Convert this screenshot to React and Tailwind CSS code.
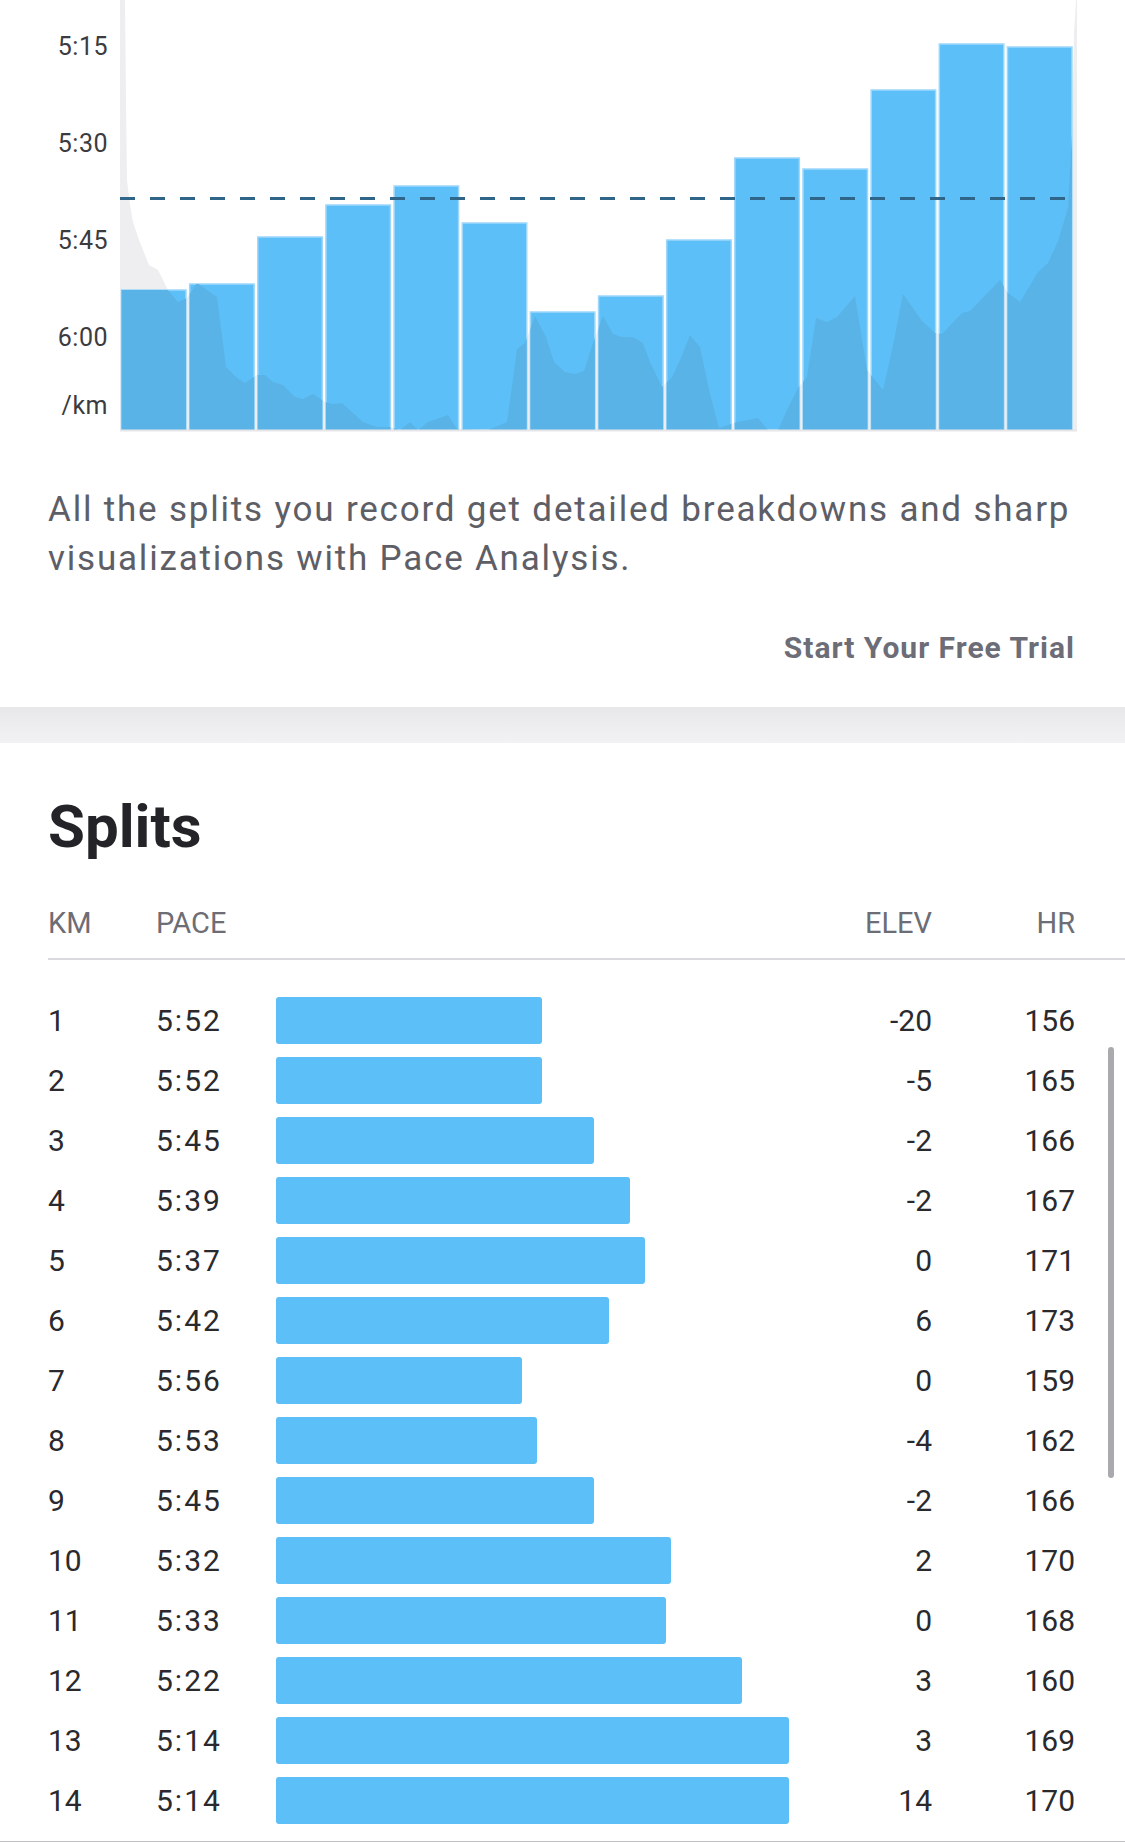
import React from "react";

// pace bars in the chart: top y of each km (page px), bottom is 430
const chartTops = [290, 284, 237, 205, 186, 223, 312, 296, 240, 158, 169, 90, 44, 47];

// elevation / hr profile drawn behind the bars
const areaPath =
  "M120,0 L125,0 L126,100 L127,180 L130,205 L133,222 L139,240 L149,265 L158,270 L168,290 L178,302 L187,298 L197,283 L207,290 L217,297 L226,367 L237,378 L245,383 L257,375 L265,375 L273,382 L283,385 L295,397 L303,399 L313,394 L325,402 L333,404 L342,403 L353,413 L363,422 L377,427 L390,427 L400,430 L410,422 L418,430 L428,422 L448,415 L457,429 L488,430 L507,422 L517,349 L525,343 L535,316 L546,337 L554,362 L565,372 L575,374 L584,371 L593,343 L603,316 L613,334 L622,337 L633,337 L643,343 L650,362 L662,387 L672,377 L681,358 L690,335 L700,347 L709,390 L719,428 L737,422 L758,418 L768,430 L778,430 L788,408 L798,388 L807,377 L816,318 L827,322 L837,317 L855,296 L867,370 L883,390 L893,345 L903,294 L922,321 L935,333 L942,334 L962,313 L970,311 L1000,280 L1008,293 L1020,302 L1038,272 L1048,263 L1058,241 L1068,208 L1072,133 L1074,33 L1076,0 L1077,0 L1077,430 L120,430 Z";

const splits = [
  { km: 1, pace: "5:52", w: 266, elev: "-20", hr: 156 },
  { km: 2, pace: "5:52", w: 266, elev: "-5", hr: 165 },
  { km: 3, pace: "5:45", w: 318, elev: "-2", hr: 166 },
  { km: 4, pace: "5:39", w: 354, elev: "-2", hr: 167 },
  { km: 5, pace: "5:37", w: 369, elev: "0", hr: 171 },
  { km: 6, pace: "5:42", w: 333, elev: "6", hr: 173 },
  { km: 7, pace: "5:56", w: 246, elev: "0", hr: 159 },
  { km: 8, pace: "5:53", w: 261, elev: "-4", hr: 162 },
  { km: 9, pace: "5:45", w: 318, elev: "-2", hr: 166 },
  { km: 10, pace: "5:32", w: 395, elev: "2", hr: 170 },
  { km: 11, pace: "5:33", w: 390, elev: "0", hr: 168 },
  { km: 12, pace: "5:22", w: 466, elev: "3", hr: 160 },
  { km: 13, pace: "5:14", w: 513, elev: "3", hr: 169 },
  { km: 14, pace: "5:14", w: 513, elev: "14", hr: 170 },
];

function PaceChart() {
  const bars = chartTops.map((top, i) => ({
    x: 121.5 + i * 68.15,
    y: top,
    w: 64.5,
    h: 430 - top,
  }));

  return (
    <div className="flex">
      <div className="w-[108px] flex flex-col items-end text-[25px] leading-[30px] tracking-[0.5px] text-[#3b3b40]">
        <span className="mt-[32px]">5:15</span>
        <span className="mt-[67px]">5:30</span>
        <span className="mt-[67px]">5:45</span>
        <span className="mt-[67px]">6:00</span>
        <span className="mt-[38px]">/km</span>
      </div>
      <svg className="ml-[12px] block" width="957" height="432" viewBox="120 0 957 432">
        <defs>
          <clipPath id="barsClip">
            {bars.map((b, i) => (
              <rect key={i} x={b.x} y={b.y} width={b.w} height={b.h} />
            ))}
          </clipPath>
        </defs>
        <path d={areaPath} fill="#eeeef0" />
        {bars.map((b, i) => (
          <rect
            key={i}
            x={b.x}
            y={b.y}
            width={b.w}
            height={b.h}
            fill="#5dbff8"
            stroke="#9fd7fb"
            strokeWidth="1.5"
          />
        ))}
        <path d={areaPath} fill="#5ab3e7" clipPath="url(#barsClip)" />
        <line x1="120" y1="430.5" x2="1077" y2="430.5" stroke="#e6e6e9" strokeWidth="2" />
        <line
          x1="120"
          y1="198.5"
          x2="1068"
          y2="198.5"
          stroke="#2e6589"
          strokeWidth="3"
          strokeDasharray="15 15"
        />
      </svg>
    </div>
  );
}

export default function App() {
  return (
    <div className="relative w-[1125px] bg-white font-[Roboto,sans-serif]">
      {/* --- pace analysis card --- */}
      <section className="h-[707px]">
        <PaceChart />
        <p className="mx-[48px] mt-[53px] text-[35px] leading-[49px] tracking-[1.8px] text-[#5e5e66] whitespace-nowrap">
          All the splits you record get detailed breakdowns and sharp
          <br />
          visualizations with Pace Analysis.
        </p>
        <div className="mt-[47px] pr-[50px] text-right text-[30px] leading-[36px] font-bold tracking-[1px] text-[#6d6d78]">
          Start Your Free Trial
        </div>
      </section>

      <div className="h-[36px] bg-gradient-to-b from-[#e8e8eb] to-[#f2f2f4]" />

      {/* --- splits table --- */}
      <section className="pt-[54px] pl-[48px]">
        <h2 className="text-[60px] leading-[60px] font-bold text-[#242428]">Splits</h2>

        <div className="mt-[45px] h-[40px] grid grid-cols-[108px_120px_556px_100px_143px] items-center text-[29px] text-[#6d6d75]">
          <span>KM</span>
          <span>PACE</span>
          <span />
          <span className="text-right">ELEV</span>
          <span className="text-right">HR</span>
        </div>
        <div className="mt-[16px] h-[2px] bg-[#d9d9de]" />

        <div className="mt-[30px]">
          {splits.map((s) => (
            <div
              key={s.km}
              className="h-[60px] grid grid-cols-[108px_120px_556px_100px_143px] items-center text-[30px] text-[#2a2a2e]"
            >
              <span>{s.km}</span>
              <span className="tracking-[2px]">{s.pace}</span>
              <div className="h-[47px] rounded-[3px] bg-[#5dbff8]" style={{ width: s.w }} />
              <span className="text-right">{s.elev}</span>
              <span className="text-right">{s.hr}</span>
            </div>
          ))}
        </div>
      </section>
      <div className="mt-[11px] h-[2px] bg-[#c0c0c4]" />

      {/* scroll indicator */}
      <div className="absolute left-[1108px] top-[1047px] w-[6px] h-[431px] rounded-full bg-[#aaaaae]" />
    </div>
  );
}
